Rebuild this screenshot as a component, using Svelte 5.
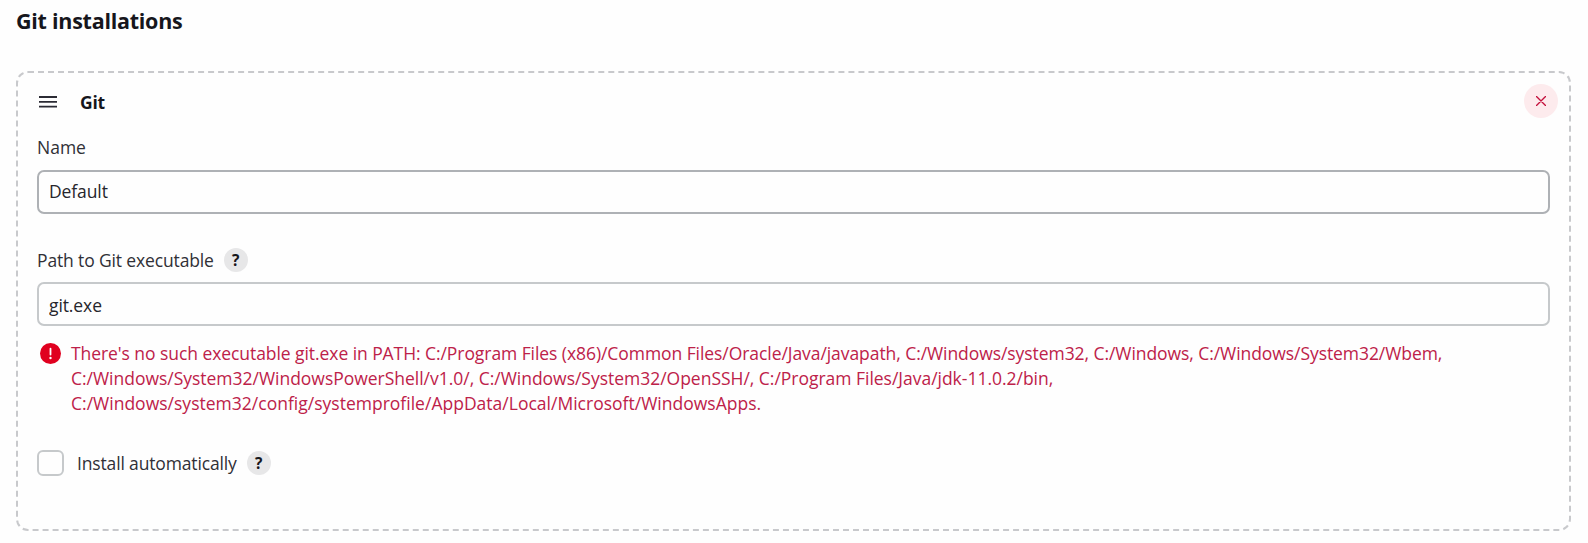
<script>
  let name = $state('Default');
  let path = $state('git.exe');
  let automatic = $state(false);
  const errorLines = [
    { text: "There's no such executable git.exe in PATH: C:/Program Files (x86)/Common Files/Oracle/Java/javapath, C:/Windows/system32, C:/Windows, C:/Windows/System32/Wbem,", cls: 'first' },
    { text: 'C:/Windows/System32/WindowsPowerShell/v1.0/, C:/Windows/System32/OpenSSH/, C:/Program Files/Java/jdk-11.0.2/bin,', cls: 'second' },
    { text: 'C:/Windows/system32/config/systemprofile/AppData/Local/Microsoft/WindowsApps.', cls: 'third' }
  ];
</script>

<main>
  <h1>Git installations</h1>
  <section class="card">
    <header>
      <svg class="handle" width="18" height="12" viewBox="0 0 18 12" aria-hidden="true">
        <path d="M0 1h18M0 5.8h18M0 10.6h18" stroke="#2b2b34" stroke-width="1.8" />
      </svg>
      <h2>Git</h2>
      <button class="remove" aria-label="Delete">
        <svg width="10" height="10" viewBox="0 0 10 10" fill="none">
          <path d="M.5.5l9 9M9.5.5l-9 9" stroke="#c3103c" stroke-width="1.4" stroke-linecap="round" />
        </svg>
      </button>
    </header>

    <label class="label" for="name">Name</label>
    <input id="name" class="field active" bind:value={name} />

    <div class="label path-label">
      <label for="path">Path to Git executable</label>
      <button class="help">?</button>
    </div>
    <input id="path" class="field git" bind:value={path} spellcheck="false" />

    <div class="error">
      <svg width="21" height="21" viewBox="0 0 21 21" aria-hidden="true">
        <circle cx="10.5" cy="10.5" r="10.5" fill="#e0001f" />
        <path d="M10.5 5.7v5.8" stroke="#fff" stroke-width="1.8" stroke-linecap="round" />
        <circle cx="10.5" cy="15" r="1.2" fill="#fff" />
      </svg>
      <div class="lines">
        {#each errorLines as line}
          <div class={line.cls}>{line.text}</div>
        {/each}
      </div>
    </div>

    <div class="check">
      <input id="auto" type="checkbox" bind:checked={automatic} />
      <label for="auto">Install automatically</label>
      <button class="help">?</button>
    </div>
  </section>
</main>

<style>
  :global(body) { background: #fefefe; }
  main {
    box-sizing: border-box;
    height: 543px;
    padding: 7px 17px 12px 16px;
    font-family: 'Open Sans', 'Noto Sans', sans-serif;
    font-size: 17.5px;
    color: #303036;
  }
  h1 { margin: 0 0 36px; height: 28px; font-size: 21.5px; line-height: 28px; font-weight: 700; letter-spacing: -.26px; color: #16161c; white-space: nowrap; }
  .card {
    box-sizing: border-box;
    height: 460px;
    border: 2px dashed #c8c9cc;
    border-radius: 12px;
    padding: 10px 19px 0;
  }
  header { display: flex; align-items: center; height: 36px; }
  .handle { margin: 1px 23px 0 2px; }
  h2 { flex: 1; margin: 2px 0 0; font-size: 17.5px; line-height: 24px; font-weight: 700; letter-spacing: -.2px; color: #16161c; }
  button { border: 0; padding: 0; font-family: inherit; display: grid; place-items: center; border-radius: 50%; }
  .remove { width: 34px; height: 34px; margin-right: -8px; background: #fdebed; }
  .remove svg { margin-right: 1px; }
  .label { display: flex; align-items: center; height: 24px; margin-top: 16px; line-height: 24px; white-space: nowrap; }
  .path-label label { letter-spacing: -.14px; }
  .check label { letter-spacing: -.15px; }
  .field {
    display: block;
    box-sizing: border-box;
    width: 100%;
    height: 44px;
    margin: 11px 0 0;
    padding: 0 10px;
    border: 2px solid #c6c9cb;
    border-radius: 7px;
    background: #fefefe;
    font: inherit;
    letter-spacing: -.1px;
    color: #26262c;
    outline: 0;
  }
  .active { border-color: #aeb1b5; padding-bottom: 2px; }
  .path-label { margin-top: 34px; }
  .git { margin-top: 10px; padding-top: 1px; }
  .help { width: 24px; height: 24px; background: #e7e7e8; color: #16161c; font-size: 15.5px; font-weight: 700; line-height: 24px; }
  .path-label .help { margin-left: 10px; }
  .error { display: flex; gap: 10px; margin: 15px 0 0 3px; color: #bd2149; }
  .error svg { flex: none; margin-top: 2px; }
  .lines { line-height: 25px; white-space: nowrap; }
  .first { letter-spacing: -.066px; }
  .second { letter-spacing: -.02px; }
  .third { letter-spacing: .01px; }
  .check { display: flex; align-items: center; height: 27px; margin-top: 33px; white-space: nowrap; }
  .check input { appearance: none; box-sizing: border-box; width: 27px; height: 26px; margin: 0 13px 0 0; border: 2px solid #c6c9cb; border-radius: 6px; background: #fefefe; }
  .check .help { margin-left: 10px; }
</style>
